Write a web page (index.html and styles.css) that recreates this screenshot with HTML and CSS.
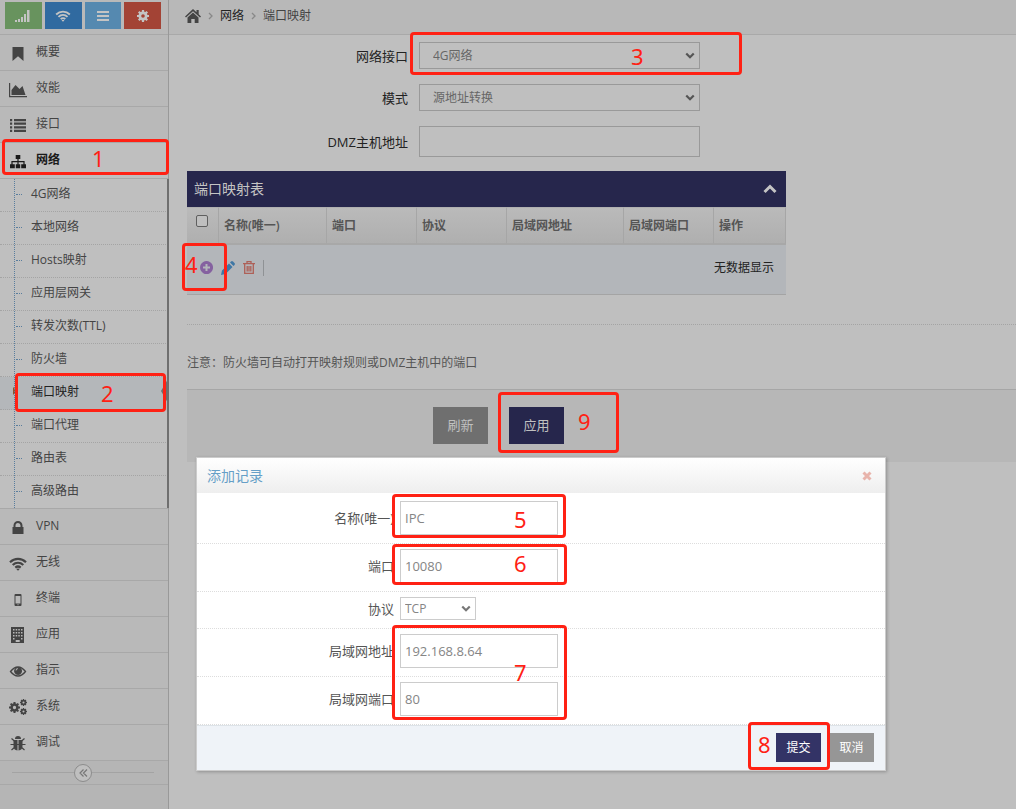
FILE: index.html
```
<!DOCTYPE html>
<html lang="zh-CN">
<head>
<meta charset="utf-8">
<title>端口映射</title>
<link rel="stylesheet" href="styles.css">
</head>
<body>
<svg class="sprite" aria-hidden="true">
  <symbol id="chevron" viewBox="0 0 12 8"><path d="M1.5 1.5 6 6l4.500-4.500" fill="none" stroke="currentColor" stroke-width="2.600"/></symbol>
  <symbol id="wifi" viewBox="0 0 18 14"><g fill="none" stroke="currentColor" stroke-width="2.200"><path d="M1 5.200C5.600 .8 12.400.8 17 5.200"/><path d="M3.700 8C6.800 5.100 11.200 5.100 14.300 8"/><path d="M6.300 10.600C8 9.200 10 9.200 11.700 10.600"/></g><path d="M7.300 12 9 13.800 10.700 12Q9 10.800 7.300 12Z"/></symbol>
  <symbol id="gear" viewBox="0 0 14 14"><circle cx="7" cy="7" r="3.700" fill="none" stroke="currentColor" stroke-width="3.200"/><path d="M7 0v3M7 11v3M0 7h3M11 7h3M2.050 2.050l2.200 2.200M9.750 9.750l2.200 2.200M2.050 11.950l2.200-2.200M9.750 4.250l2.200-2.200" stroke="currentColor" stroke-width="2.600"/></symbol>
</svg>
<div class="app">
  <aside class="sidebar">
    <div class="shortcuts">
      <button class="shortcut green" aria-label="信号"><svg width="16" height="13" viewBox="0 0 16 13"><path d="M0 11h2v2H0zM3 10h2v3H3zM6 8h2v5H6zM9 5h2v8H9zM12 1h2.500v12H12z"/></svg></button>
      <button class="shortcut blue" aria-label="无线"><svg width="16" height="12"><use href="#wifi"/></svg></button>
      <button class="shortcut sky" aria-label="列表"><svg width="12" height="10" viewBox="0 0 12 10"><path d="M0 0h12v2H0zM0 4h12v2H0zM0 8h12v2H0z"/></svg></button>
      <button class="shortcut red" aria-label="设置"><svg width="12" height="12"><use href="#gear"/></svg></button>
    </div>
    <nav class="menu">
      <a href="#" class="item"><svg width="18" height="18" viewBox="0 0 18 18"><path d="M3.500 3h11v14L9 12.200 3.500 17z"/></svg>概要</a>
      <a href="#" class="item"><svg width="18" height="18" viewBox="0 0 18 18"><path d="M0 3h1.200v13H18v1.200H0zM2.500 15V10L6.500 5l4 4 3-3 3 9z"/></svg>效能</a>
      <a href="#" class="item"><svg width="18" height="18" viewBox="0 0 18 18"><path d="M1 3h2.200v2.200H1zM5 3h12v2.200H5zM1 6.600h2.200v2.200H1zM5 6.600h12v2.200H5zM1 10.200h2.200v2.200H1zM5 10.200h12v2.200H5zM1 13.800h2.200V16H1zM5 13.800h12V16H5z"/></svg>接口</a>
      <a href="#" class="item open"><svg width="18" height="18" viewBox="0 0 18 18"><path d="M6.700 3h4.600v4H9.600v2h6v3.200H17v4h-4.800v-4h2.200V10.200H9.600v2h1.600v4H6.800v-4h1.600v-2H3.600v2h2.200v4H1v-4h1.400V9h6V7H6.700z"/></svg>网络</a>
      <div class="submenu">
        <a href="#">4G网络</a>
        <a href="#">本地网络</a>
        <a href="#">Hosts映射</a>
        <a href="#">应用层网关</a>
        <a href="#">转发次数(TTL)</a>
        <a href="#">防火墙</a>
        <a href="#" class="current" aria-current="page">端口映射</a>
        <a href="#">端口代理</a>
        <a href="#">路由表</a>
        <a href="#">高级路由</a>
      </div>
      <a href="#" class="item"><svg width="18" height="18" viewBox="0 0 18 18"><path d="M3.500 9h1V7.500a4.500 4.500 0 0 1 9 0V9h1v7h-11zM6.500 9h5V7.500a2.500 2.500 0 0 0-5 0z"/></svg>VPN</a>
      <a href="#" class="item"><svg width="18" height="18" viewBox="0 -3 18 18"><use href="#wifi" width="18" height="14"/></svg>无线</a>
      <a href="#" class="item"><svg width="18" height="18" viewBox="0 0 18 18"><path fill-rule="evenodd" d="M6.500 4h5q1 0 1 1v10q0 1-1 1h-5q-1 0-1-1V5q0-1 1-1zM6.500 6v7.500h5V6zM8.500 14.200v1h1v-1z"/></svg>终端</a>
      <a href="#" class="item"><svg width="18" height="18" viewBox="0 0 18 18"><path fill-rule="evenodd" d="M2 1h13v16H2zM4 3v1.500h1.500V3zM6.700 3v1.500h1.500V3zM9.300 3v1.500h1.500V3zM12 3v1.500h1.500V3zM4 6v1.500h1.500V6zM6.700 6v1.500h1.500V6zM9.300 6v1.500h1.500V6zM12 6v1.500h1.500V6zM4 9v1.500h1.500V9zM6.700 9v1.500h1.500V9zM9.300 9v1.500h1.500V9zM12 9v1.500h1.500V9zM4 12v1.500h1.500V12zM12 12v1.500h1.500V12zM6.700 14v2h4v-2z"/></svg>应用</a>
      <a href="#" class="item"><svg width="18" height="18" viewBox="0 0 18 18"><path d="M1.500 9.500Q5 5 9 5t7.500 4.500Q13 14 9 14T1.500 9.500Z" fill="none" stroke="currentColor" stroke-width="1.300"/><path fill-rule="evenodd" d="M9 5a4 4 0 1 0 .1 0zM9 6.200a2.300 2.300 0 0 0-2.400 2.400h.8A1.600 1.600 0 0 1 9 7z"/></svg>指示</a>
      <a href="#" class="item"><svg width="18" height="18" viewBox="0 0 18 18"><use href="#gear" x="0" y="4" width="11" height="11"/><use href="#gear" x="11" y="1" width="7" height="7"/><use href="#gear" x="11" y="10" width="7" height="7"/></svg>系统</a>
      <a href="#" class="item"><svg width="18" height="18" viewBox="0 0 18 18"><path d="M6 5a3 3 0 0 1 6 0zM4.500 6h4v10.500Q4.500 16 4.500 12zM9.500 6h4v6q0 4-4 4.500z"/><path d="M2.500 4.500 6 7.500M15.500 4.500 12 7.500M1.500 10.500h15M2.500 16 6 13M15.500 16 12 13" fill="none" stroke="currentColor" stroke-width="1.200"/></svg>调试</a>
    </nav>
    <div class="collapse">
      <button aria-label="收起菜单"><svg width="9" height="8" viewBox="0 0 9 8"><path d="M4.500.5 1 4l3.500 3.500M8 .5 4.500 4 8 7.500" fill="none" stroke="currentColor" stroke-width="1.200"/></svg></button>
    </div>
  </aside>

  <main class="main">
    <nav class="crumbs">
      <svg width="16" height="14" viewBox="0 0 16 14"><path d="M8 0 11.500 3.200V1h2.200v4.200L16 7.500l-1 1L8 2.200 1 8.500l-1-1zM8 3.500l5.500 5V14H9.700v-4H6.300v4H2.500V8.500z"/></svg>
      <svg class="sep" width="5" height="8" viewBox="0 0 5 8"><path d="m1 1 3 3-3 3" fill="none" stroke="currentColor" stroke-width="1.300"/></svg>
      <a href="#">网络</a>
      <svg class="sep" width="5" height="8" viewBox="0 0 5 8"><path d="m1 1 3 3-3 3" fill="none" stroke="currentColor" stroke-width="1.300"/></svg>
      <span>端口映射</span>
    </nav>
    <div class="page">
      <form class="settings">
        <div class="row"><label for="iface">网络接口</label><span class="pick"><select id="iface"><option>4G网络</option></select><svg width="10" height="7"><use href="#chevron"/></svg></span></div>
        <div class="row"><label for="mode">模式</label><span class="pick"><select id="mode"><option>源地址转换</option></select><svg width="10" height="7"><use href="#chevron"/></svg></span></div>
        <div class="row"><label for="dmz">DMZ主机地址</label><input id="dmz" type="text"></div>
      </form>

      <section class="widget">
        <header><h2>端口映射表</h2><button aria-label="折叠"><svg width="14" height="10" viewBox="0 0 14 10"><path d="m1.500 8 5.500-5.500L12.500 8" fill="none" stroke="currentColor" stroke-width="3"/></svg></button></header>
        <table>
          <thead><tr>
            <th class="c-check"><input type="checkbox" aria-label="全选"></th>
            <th class="c-name">名称(唯一)</th><th class="c-port">端口</th><th class="c-port">协议</th>
            <th class="c-addr">局域网地址</th><th class="c-port">局域网端口</th><th>操作</th>
          </tr></thead>
        </table>
        <div class="tools">
          <button class="add" aria-label="添加"><svg width="13" height="13" viewBox="0 0 13 13"><path fill-rule="evenodd" d="M6.500 0a6.500 6.500 0 1 0 .1 0zM5.500 3v2.500H3v2h2.500V10h2V7.500H10v-2H7.500V3z"/></svg></button>
          <button class="edit" aria-label="编辑"><svg width="14" height="14" viewBox="0 0 14 14"><path d="M0 14 1 9.500 8 2.500 11.500 6l-7 7zM9 1.500l1-1q1-.8 2 0L13.500 2q.8 1 0 2l-1 1z"/></svg></button>
          <button class="del" aria-label="删除"><svg width="12" height="13" viewBox="0 0 12 13"><path d="M0 2.700h12M4 2.500V.7h4v1.800M1.700 3v9.300h8.600V3M4.200 5v5.500M6 5v5.500M7.800 5v5.500" fill="none" stroke="currentColor" stroke-width="1.300"/></svg></button>
          <span class="bar"></span>
          <span class="empty">无数据显示</span>
        </div>
      </section>

      <hr>
      <p class="note">注意：防火墙可自动打开映射规则或DMZ主机中的端口</p>
      <div class="actions"><button class="btn grey">刷新</button><button class="btn navy">应用</button></div>
    </div>
  </main>
</div>

<div class="dialog" role="dialog" aria-labelledby="dlg-title">
  <header><h3 id="dlg-title">添加记录</h3><button aria-label="关闭"><svg width="10" height="10" viewBox="0 0 10 10"><path d="m1.500 1.500 7 7m0-7-7 7" stroke="currentColor" stroke-width="3"/></svg></button></header>
  <form>
    <div class="field"><label for="f-name">名称(唯一)</label><input id="f-name" type="text" value="IPC"></div>
    <div class="field"><label for="f-port">端口</label><input id="f-port" type="text" value="10080"></div>
    <div class="field short"><label for="f-proto">协议</label><span class="pick"><select id="f-proto"><option>TCP</option></select><svg width="10" height="7"><use href="#chevron"/></svg></span></div>
    <div class="field"><label for="f-addr">局域网地址</label><input id="f-addr" type="text" value="192.168.8.64"></div>
    <div class="field"><label for="f-lport">局域网端口</label><input id="f-lport" type="text" value="80"></div>
  </form>
  <footer><button class="navy">提交</button><button class="grey">取消</button></footer>
</div>

<div class="mark m1"><span>1</span></div>
<div class="mark m2"><span>2</span></div>
<div class="mark m3"><span>3</span></div>
<div class="mark m4"><span>4</span></div>
<div class="mark m5"><span>5</span></div>
<div class="mark m6"><span>6</span></div>
<div class="mark m7"><span>7</span></div>
<div class="mark m8"><span>8</span></div>
<div class="mark m9"><span>9</span></div>
</body>
</html>
```
FILE: styles.css
```
* { box-sizing: border-box; }
body {
  margin: 0;
  position: relative;
  background: #bfbfbf;
  color: #444;
  font: 12px/18px "Open Sans", "Noto Sans CJK SC", sans-serif;
}
svg { display: block; fill: currentColor; flex: none; }
.sprite { position: absolute; width: 0; height: 0; }
a { color: inherit; text-decoration: none; }
button { border: 0; padding: 0; background: none; color: inherit; font: inherit; display: flex; align-items: center; justify-content: center; }
input, select { font: inherit; color: inherit; border-radius: 0; margin: 0; outline: 0; }
h2, h3, p { margin: 0; font-weight: 400; }

.app { display: flex; min-height: 100vh; }

/* Sidebar */
.sidebar { width: 169px; flex: none; background: #b5b5b5; border-right: 1px solid #999; }
.shortcuts { display: flex; gap: 3px; padding: 2px 7px 5px 5px; height: 35px; border-bottom: 1px solid #a8a8a8; background: #b9b9b9; }
.shortcut { flex: 1; color: #c4c4c4; }
.green { background: #68935e; }
.blue { background: #306aa0; }
.sky { background: #5589b0; }
.red { background: #a34335; }
.item { display: flex; align-items: center; gap: 9px; height: 36px; padding: 0 9px 2px; background: #b9b9b9; border-bottom: 1px solid #a8a8a8; }
.item svg { margin-top: 2px; }
.item.open { background: #bfbfbf; color: #1a1a1a; font-weight: 600; }
.submenu { position: relative; background: #bfbfbf; border-bottom: 1px solid #a8a8a8; }
.submenu::before { content: ""; position: absolute; left: 14px; top: 0; bottom: 0; border-left: 1px dotted #597d9d; z-index: 1; }
.submenu::after { content: ""; position: absolute; right: -1px; top: 0; bottom: 0; width: 2px; background: #6f6f6f; }
.submenu a { position: relative; display: block; height: 33px; padding: 6px 0 8px 31px; border-bottom: 1px dotted #a4a4a4; }
.submenu a:last-child { border-bottom: 0; height: 32px; }
.submenu a::before { content: ""; position: absolute; left: 16px; top: 15px; width: 6px; border-top: 1px dotted #597d9d; }
.submenu a.current { background: #b4b7ba; color: #222; }
.submenu a.current::before { left: 13px; top: 10px; width: 0; border: 4px solid transparent; border-left-color: #8d5530; border-right: 0; }
.submenu a.current::after { content: ""; position: absolute; right: 0; top: 2px; border: 12px solid transparent; border-right: 7px solid #6f6f6f; border-left: 0; }
.collapse { display: flex; align-items: center; height: 24px; padding: 0 14px 0 12px; border-bottom: 1px solid #a8a8a8; }
.collapse::before, .collapse::after { content: ""; flex: 1; border-top: 1px solid #a3a3a3; }
.collapse button { width: 18px; height: 18px; border: 1px solid #8c8c8c; border-radius: 50%; background: #bfbfbf; color: #777; }

/* Page */
.main { flex: 1; min-width: 0; }
.crumbs { display: flex; align-items: center; gap: 7px; height: 35px; padding: 0 0 2px 16px; background: #b8b8b8; border-bottom: 1px solid #a9a9a9; }
.crumbs a { color: #222; }
.crumbs .sep { color: #888; }
.page { padding: 7px 0 0 18px; }
.settings { display: flex; flex-direction: column; gap: 15px; width: 513px; max-width: 100%; }
.row { display: flex; align-items: center; gap: 11px; height: 27px; color: #222; }
.row:last-child { height: 31px; }
.row label { flex: 1; text-align: right; font-size: 13px; }
.pick { position: relative; display: flex; color: #666; }
.pick select { appearance: none; width: 100%; height: 100%; background: transparent; border: 1px solid #999; padding: 0 13px; }
.pick svg { position: absolute; right: 5px; top: 50%; margin-top: -4px; pointer-events: none; color: #555; }
.row .pick, .row input { width: 281px; height: 100%; }
.row input { background: transparent; border: 1px solid #999; }

.widget { width: 599px; max-width: 100%; margin-top: 14px; }
.widget header { display: flex; align-items: center; justify-content: space-between; height: 36px; padding: 0 9px 0 7px; background: #26264c; color: #c4c4c4; }
.widget h2 { font-size: 14px; }
table { width: 100%; border-collapse: separate; border-spacing: 0; table-layout: fixed; }
th { height: 38px; padding: 0 5px; text-align: left; font-weight: 600; color: #555; background: linear-gradient(#bababa, #afafaf); border-right: 1px solid #a6a6a6; border-top: 1px solid #b0b0b0; border-bottom: 2px solid #a8a8a8; }
.c-check { width: 32px; padding: 7px 0 0 9px; vertical-align: top; }
.c-check input { display: block; appearance: none; width: 12px; height: 12px; border: 1px solid #5f5f5f; border-radius: 2px; background: #bfbfbf; }
.c-name { width: 108px; }
.c-port { width: 90px; }
.c-addr { width: 117px; }
.tools { display: flex; align-items: center; height: 50px; padding: 0 12px 4px 13px; gap: 8px; background: #b3b6ba; border-bottom: 1px solid #a4a4a4; }
.add { color: #8561a0; }
.edit { color: #3f77a5; }
.del { color: #ae6057; }
.bar { height: 16px; border-left: 1px solid #8f9295; }
.empty { margin-left: auto; color: #222; }
hr { margin: 29px 0 0; border: 0; border-top: 1px dotted #a4a4a4; }
.note { margin: 29px 0 17px; color: #555; }
.actions { display: flex; gap: 21px; height: 73px; padding: 17px 0 18px 246px; background: #b7b7b7; border-top: 1px solid #a6a6a6; }
.btn { width: 55px; padding-bottom: 2px; color: #c0c0c0; font-size: 13px; }
.btn.grey { background: #6f6f6f; }
.btn.navy { background: #26264c; }

/* Add-record dialog */
.dialog { position: absolute; left: 196px; top: 457px; width: 690px; background: #fff; border: 1px solid #ccc; box-shadow: 1px 1px 3px rgba(0, 0, 0, .25); color: #555; }
.dialog header { display: flex; align-items: center; justify-content: space-between; height: 35px; padding: 0 13px 0 10px; background: linear-gradient(#fff, #eee); }
.dialog h3 { font-size: 14px; color: #669fc7; }
.dialog header button { color: #e8b4ac; }
.field { display: flex; align-items: center; gap: 6px; height: 48px; padding-bottom: 3px; border-bottom: 1px dotted #ddd; }
.field:first-child { height: 51px; padding-bottom: 0; }
.field.short { height: 37px; }
.field label { width: 197px; text-align: right; font-size: 13px; white-space: nowrap; }
.field input { width: 158px; height: 34px; padding: 0 4px; border: 1px solid #ccc; background: #fff; color: #858585; font-size: 13px; }
.field .pick { width: 76px; height: 23px; color: #858585; }
.field .pick select { border-color: #ccc; padding: 0 4px; }
.field .pick svg { color: #777; }
.dialog footer { display: flex; justify-content: flex-end; gap: 8px; padding: 7px 11px 8px; background: #eff3f8; border-top: 1px solid #dde3e8; }
.dialog footer button { width: 45px; height: 29px; color: #fff; }
.dialog .navy { background: #333366; }
.dialog .grey { background: #969696; }

/* Numbered step marks */
.mark { position: absolute; border: 3px solid #ff2114; border-radius: 4px; pointer-events: none; }
.mark span { position: absolute; color: #ff2114; font: 22px/22px "Noto Sans", sans-serif; }
.m1 { left: 2px; top: 139px; width: 167px; height: 36px; }
.m1 span { left: 87px; top: 5px; }
.m2 { left: 15px; top: 373px; width: 151px; height: 39px; }
.m2 span { left: 83px; top: 6px; }
.m3 { left: 410px; top: 32px; width: 332px; height: 43px; }
.m3 span { left: 218px; top: 10px; }
.m4 { left: 182px; top: 243px; width: 45px; height: 48px; }
.m4 span { left: 0; top: 7px; }
.m5 { left: 392px; top: 494px; width: 174px; height: 44px; }
.m5 span { left: 119px; top: 11px; }
.m6 { left: 392px; top: 544px; width: 175px; height: 41px; }
.m6 span { left: 119px; top: 5px; }
.m7 { left: 392px; top: 625px; width: 175px; height: 95px; }
.m7 span { left: 119px; top: 33px; }
.m8 { left: 748px; top: 722px; width: 82px; height: 48px; }
.m8 span { left: 7px; top: 8px; }
.m9 { left: 498px; top: 392px; width: 121px; height: 61px; }
.m9 span { left: 77px; top: 15px; }
```
